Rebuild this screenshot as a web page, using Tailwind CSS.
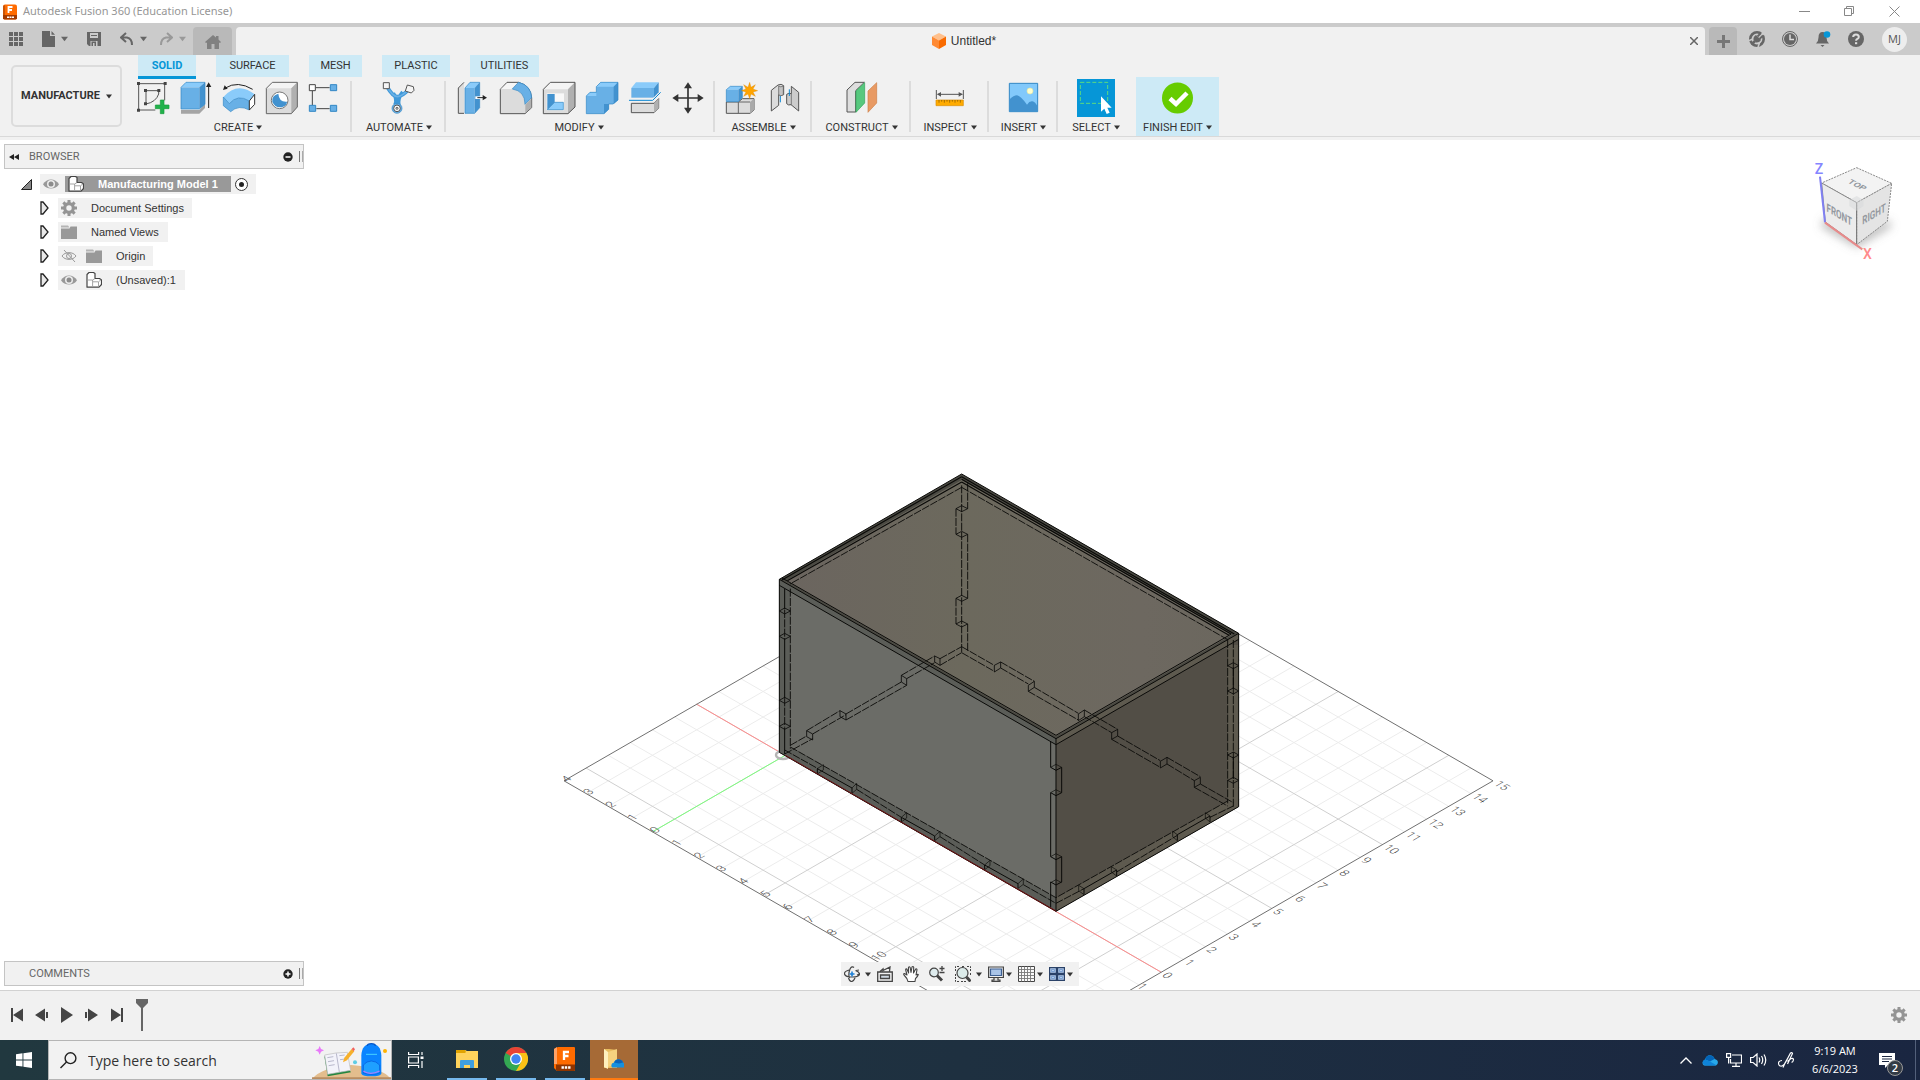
<!DOCTYPE html>
<html lang="en">
<head>
<meta charset="utf-8">
<title>Autodesk Fusion 360 (Education License)</title>
<script src="https://cdn.jsdelivr.net/npm/@tailwindcss/browser@4"></script>
</head>
<body class="flex h-screen flex-col overflow-hidden bg-white font-['Roboto',sans-serif] text-[11px] text-[#333]">

<svg class="hidden" aria-hidden="true">
  <symbol id="caret" viewBox="0 0 6 5"><path d="M0 .5h6L3 4.5z" fill="currentColor"/></symbol>
  <symbol id="eye" viewBox="0 0 16 16"><path d="M0 8.2C3.500 1.800 12.500 1.800 16 8.200 12.500 14 3.500 14 0 8.200z" fill="#999"/><circle cx="8" cy="8" r="4" fill="#ececec"/><circle cx="8" cy="8" r="2.500" fill="#8c8c8c"/></symbol>
  <symbol id="eyeoff" viewBox="0 0 16 16"><path d="M1 8C4 3.500 12 3.500 15 8 12 12.500 4 12.500 1 8zM3 2l11 12" fill="none" stroke="#999"/><circle cx="8" cy="8" r="2.500" fill="none" stroke="#999"/></symbol>
  <symbol id="gear" viewBox="0 0 16 16"><g fill="none" stroke="#949494"><circle cx="8" cy="8" r="4.300" stroke-width="3.200"/><path d="M8 0v3.500M8 12.500V16M0 8h3.500M12.500 8H16M2.340 2.340l2.500 2.500M11.160 11.160l2.500 2.500M2.340 13.660l2.500-2.500M11.160 4.840l2.500-2.500" stroke-width="3"/></g></symbol>
  <symbol id="folder" viewBox="0 0 16 16"><path d="M0 1.500h7l1.500 2H0z" fill="#b4b4b4"/><path d="M0 4.500h8.500l1-2H16V15H0z" fill="#999"/></symbol>
  <symbol id="comp" viewBox="0 0 16 16"><path d="M1 2.500l2-2h4.500l1.500 1v5h4.500l2 1.500v4.500l-2.500 2.700H1z" fill="#fff" stroke="#444" stroke-width="1.200" stroke-linejoin="round"/><path d="M1.600 8h5l2.400-1.500M6.600 8v6.500M7 9.800h5.500l2.500-2M12.500 10v4.500" fill="none" stroke="#999" stroke-width=".9"/></symbol>
  <symbol id="tri" viewBox="0 0 9 14"><path d="M1 1l2 0 5 6-5 6H1z" fill="#e9e9e9" stroke="#222" stroke-width="1.300"/></symbol>
</svg>

<!-- Window title bar -->
<header class="flex h-[23px] shrink-0 items-center pl-[3px] text-[#969696]">
  <svg class="h-4 w-4" viewBox="0 0 16 16"><rect width="14" height="15" y=".5" rx="2" fill="#ff6b00"/><path d="M0 11h14v3.500l-1 1H1l-1-1z" fill="#a33a00"/><path d="M0 2l2-1v10H0z" fill="#c95406"/><path d="M5.500 9V3h4M5.500 6h3.500" stroke="#fff" stroke-width="1.800" fill="none"/><path d="M4 13.200h7" stroke="#fff" stroke-width="1.500" stroke-dasharray="2 .5"/></svg>
  <h1 class="ml-1 font-['Noto_Sans',sans-serif] text-[11px]">Autodesk Fusion 360 (Education License)</h1>
  <div class="ml-auto mr-5 flex items-center gap-[34px]">
    <button aria-label="Minimize"><svg class="block h-[11px] w-[11px]" viewBox="0 0 11 11" fill="none" stroke="#888"><path d="M0 5.500h11"/></svg></button>
    <button aria-label="Restore"><svg class="block h-[11px] w-[11px]" viewBox="0 0 11 11" fill="none" stroke="#888"><path d="M.5 2.500h7v7h-7zM2.500 2.500v-2h7v7h-2"/></svg></button>
    <button aria-label="Close"><svg class="block h-[11px] w-[11px]" viewBox="0 0 11 11" fill="none" stroke="#888"><path d="M.5.5l10 10M10.500.5l-10 10"/></svg></button>
  </div>
</header>

<!-- Quick access bar and document tabs -->
<nav class="flex h-8 shrink-0 items-end bg-[#cbcbcb]">
  <div class="flex h-8 w-[193px] shrink-0 items-center pl-[9px] text-[#666]">
    <button aria-label="Data panel"><svg class="block h-[14px] w-[14px]" viewBox="0 0 14 14" fill="#666"><path d="M0 0h4v4H0zM5 0h4v4H5zM10 0h4v4h-4zM0 5h4v4H0zM5 5h4v4H5zM10 5h4v4h-4zM0 10h4v4H0zM5 10h4v4H5zM10 10h4v4h-4z"/></svg></button>
    <button aria-label="File" class="ml-[19px] flex items-center gap-[6px]"><svg class="h-4 w-[13px]" viewBox="0 0 13 16" fill="#666"><path d="M0 0h8v5h5v11H0zM9.500 0L13 3.700H9.500z"/></svg><svg class="h-[6px] w-[7px]"><use href="#caret"/></svg></button>
    <button aria-label="Save" class="ml-[19px]"><svg class="block h-[14px] w-[14px]" viewBox="0 0 14 14"><path d="M0 0h14v14H2l-2-2z" fill="#666"/><path d="M3 1h8v5H3zM3.500 9h7v5h-7z" fill="#cbcbcb"/><path d="M4.500 9.500h4.500v4.500H4.500zM4 3h6v1H4z" fill="#666"/><path d="M6 11h1.500v3H6z" fill="#cbcbcb"/></svg></button>
    <button aria-label="Undo" class="ml-[19px] flex items-center gap-[6px]"><svg class="h-[14px] w-[14px]" viewBox="0 0 14 14" fill="none" stroke="#666" stroke-width="2"><path d="M6 1L1 5.500 6 10M1.500 5.500H7q5 1 5 7.500"/></svg><svg class="h-[6px] w-[7px]"><use href="#caret"/></svg></button>
    <button aria-label="Redo" class="ml-3 flex items-center gap-[6px] text-[#999]"><svg class="h-[14px] w-[14px]" viewBox="0 0 14 14" fill="none" stroke="#999" stroke-width="2"><path d="M8 1l5 4.500L8 10M12.500 5.500H7q-5 1-5 7.500"/></svg><svg class="h-[6px] w-[7px]"><use href="#caret"/></svg></button>
  </div>
  <button aria-label="Home" class="flex h-7 w-[39px] items-center justify-center rounded-t-[4px] bg-[#b9b9b9]"><svg class="mt-px h-[14px] w-4" viewBox="0 0 16 14"><path d="M8 0l3 2.500V1h2.500v3.500L16 7l-1 1-1-.5V14H2V7.500L1 8 0 7z" fill="#808080"/><path d="M6.500 9h3v5h-3z" fill="#b9b9b9"/></svg></button>
  <div class="ml-1 flex h-7 flex-1 items-center rounded-t-[4px] bg-[#f1f1f1]">
    <div class="flex flex-1 items-center justify-center gap-[5px] pl-[2px] font-['Liberation_Sans',sans-serif] text-[12px]"><svg class="h-4 w-[14px]" viewBox="0 0 14 16"><path d="M7 0l7 3.500L7 7.500 0 3.500z" fill="#ffc08c"/><path d="M0 3.500l7 4V16l-7-4z" fill="#ff8a34"/><path d="M14 3.500l-7 4V16l7-4z" fill="#f96b00"/></svg>Untitled*</div>
    <button aria-label="Close tab" class="mr-[7px]"><svg class="block h-2 w-2" viewBox="0 0 8 8" stroke="#666" stroke-width="1.500"><path d="M0 0l8 8M8 0L0 8"/></svg></button>
  </div>
  <button aria-label="New tab" class="ml-1 flex h-7 w-7 items-center justify-center rounded-t-[4px] bg-[#b9b9b9]"><svg class="h-[13px] w-[13px]" viewBox="0 0 13 13" stroke="#777" stroke-width="3"><path d="M6.500 0v13M0 6.500h13"/></svg></button>
  <div class="flex h-8 items-center gap-[17px] pl-3 pr-[13px]">
    <button aria-label="Extensions"><svg class="block h-4 w-4" viewBox="0 0 16 16" fill="none"><circle cx="8" cy="8" r="6.700" stroke="#666" stroke-width="2.600"/><path d="M0 9.500L4 8M9 16l1.500-4" stroke="#cbcbcb" stroke-width="1.500"/><path d="M2.500 13.500l3.500-3.500" stroke="#666" stroke-width="2.500"/><path d="M4.500 9q-.5-3.500 2.500-5l5 5q-2 3-5 2.500z" fill="#666"/><path d="M11 5.500l4-4" stroke="#cbcbcb" stroke-width="3"/><path d="M8.500 5.500l3.500-3.500M10.500 8l3.500-3.500" stroke="#666" stroke-width="1.800"/></svg></button>
    <button aria-label="Job status"><svg class="block h-4 w-4" viewBox="0 0 16 16" fill="none"><circle cx="8" cy="8" r="7.500" stroke="#666"/><circle cx="8" cy="8" r="6" fill="#666"/><path d="M8 3.500V8.500h4" stroke="#ddd" stroke-width="1.500"/></svg></button>
    <button aria-label="Notifications"><svg class="block h-4 w-4" viewBox="0 0 16 16"><path d="M1 12.500q2.500-2 2.500-6Q3.500 1 7.500 1t4 5.500q0 4 2.500 6zM5.500 14h4l-2 2z" fill="#666"/><circle cx="12" cy="3.500" r="3.300" fill="#0696d7"/></svg></button>
    <button aria-label="Help"><svg class="block h-4 w-4" viewBox="0 0 16 16"><circle cx="8" cy="8" r="8" fill="#666"/><path d="M5.200 6q0-2.500 2.800-2.500T10.800 6Q10.800 7.300 9 8.200q-.9.500-.9 1.600" stroke="#ddd" stroke-width="2" fill="none"/><path d="M7 11.200h2.200v2H7z" fill="#ddd"/></svg></button>
    <button class="ml-px h-[25px] w-[25px] rounded-full bg-[#ededed] font-['Open_Sans',sans-serif] text-[11px] text-[#555]">MJ</button>
  </div>
</nav>

<!-- Ribbon -->
<section class="flex h-[82px] shrink-0 border-b border-[#d9d9d9] bg-[#f1f1f1]">
  <button class="ml-[11px] mt-[10px] flex h-[62px] w-[111px] shrink-0 items-center justify-center gap-[6px] rounded-[5px] border-2 border-[#dcdcdc] text-[11px] font-bold">MANUFACTURE <svg class="h-[5px] w-[6px]"><use href="#caret"/></svg></button>
  <div class="flex flex-1 flex-col pl-[2px]">
    <div class="flex h-[22px] items-start gap-5 pl-[14px]">
      <button class="relative z-10 h-6 w-[58px] border-b-[3px] border-[#0696d7] bg-[#cdeaf6] pt-px font-bold text-[#0696d7]">SOLID</button>
      <button class="h-[22px] w-[73px] bg-[#cdeaf6] pt-px">SURFACE</button>
      <button class="h-[22px] w-[53px] bg-[#cdeaf6] pt-px">MESH</button>
      <button class="h-[22px] w-[68px] bg-[#cdeaf6] pt-px">PLASTIC</button>
      <button class="h-[22px] w-[69px] bg-[#cdeaf6] pt-px">UTILITIES</button>
    </div>
    <div class="flex flex-1">
      <div class="relative flex w-[228px] flex-col justify-between pt-[5px] after:absolute after:right-0 after:top-1 after:h-[51px] after:w-[2px] after:bg-[#dcdcdc]">
        <div class="flex gap-[11px] px-3">
          <button aria-label="Create sketch"><svg class="block h-8 w-8 overflow-visible" viewBox="408 246 96 96" fill="none" stroke="#555" stroke-width="3"><path d="M418 251h76v50M416 254v76h50M438 272h38v10q-8 24-38 30z"/><path d="M411 246h9v9h-9zM491 246h9v9h-9zM411 326h9v9h-9zM432 267h9v9h-9zM472 267h9v9h-9zM432 307h9v9h-9z" fill="#444" stroke="none"/><path d="M481 300h11v15h15v11h-15v15h-11v-15h-15v-11h15z" fill="#21b24b" stroke="#189a3d" stroke-width="2"/></svg></button>
          <button aria-label="Extrude"><svg class="block h-8 w-8 overflow-visible" viewBox="537 246 96 96"><path d="M543 330h55l17-17v11l-17 17h-55z" fill="#a5a5a5"/><path d="M543 262l15-15h57l-17 15z" fill="#8acbfa"/><path d="M543 262h55v65h-55z" fill="#68b0e6"/><path d="M598 262l17-15v66l-17 14z" fill="#4292cf"/><path d="M543 262l15-15h57v66l-17 14h-55z" fill="none" stroke="#3287c4" stroke-width="2"/><path d="M626 252v72" stroke="#222" stroke-width="3"/><path d="M618 261l8-14 8 14z" fill="#222"/></svg></button>
          <button aria-label="Revolve"><svg class="block h-8 w-8 overflow-visible" viewBox="666 246 96 96"><path d="M670 291q43-48 94-8l-16 20q-35-22-60 8z" fill="#8acbfa"/><path d="M670 291l18 20q25-30 60-8v27q-32-17-56 5l-22-18z" fill="#68b0e6" stroke="#3287c4" stroke-width="2"/><path d="M748 303l16-20v30l-16 17z" fill="#fff" stroke="#333" stroke-width="3"/><path d="M676 264q37-23 82 4" fill="none" stroke="#222" stroke-width="3"/><path d="M669 270l5-14 9 10z" fill="#222"/></svg></button>
          <button aria-label="Hole"><svg class="block h-8 w-8 overflow-visible" viewBox="795 246 96 96"><path d="M799 265l18-18h75v74l-18 20h-75z" fill="#dcdcdc"/><path d="M799 265l18-18h75l-18 18z" fill="#f4f4f4"/><path d="M874 265l18-18v74l-18 20z" fill="#b0b0b0"/><path d="M799 265l18-18h75v74l-18 20h-75z" fill="none" stroke="#666" stroke-width="3"/><circle cx="839" cy="301" r="25" fill="#fff" stroke="#777" stroke-width="3"/><path d="M835 281q-20 5-18 24 8 20 30 16 14-5 14-16-24 2-26-24z" fill="#4292cf"/></svg></button>
          <button aria-label="Rectangular pattern"><svg class="block h-8 w-8 overflow-visible" viewBox="924 246 96 96" stroke-width="3"><path d="M947 263h42M937 273v42M949 326h40" fill="none" stroke="#444"/><path d="M928 254h18v18h-18z" fill="#fff" stroke="#444"/><path d="M991 254h19v18h-19zM928 316h19v18h-19zM991 316h19v18h-19z" fill="#68b0e6" stroke="#3287c4"/></svg></button>
        </div>
        <button class="flex items-center justify-center gap-[3px]">CREATE <svg class="h-[5px] w-[6px]"><use href="#caret"/></svg></button>
      </div>
      <div class="relative flex w-[94px] flex-col justify-between pt-[5px] after:absolute after:right-0 after:top-1 after:h-[51px] after:w-[2px] after:bg-[#dcdcdc]">
        <button aria-label="Automated modeling" class="mx-auto"><svg class="block h-8 w-8 overflow-visible" viewBox="1149 246 96 96"><path d="M1160 258q18 32 32 32t36-24M1180 280q13 18 5 34M1208 276q-17 20-11 42" fill="none" stroke="#3e98d8" stroke-width="11"/><path d="M1160 258q18 32 32 32t36-24" fill="none" stroke="#68b0e6" stroke-width="5"/><circle cx="1191" cy="325" r="15" fill="#68b0e6" stroke="#3287c4" stroke-width="2"/><g fill="#f5f5f5" stroke="#555" stroke-width="3"><circle cx="1191" cy="325" r="10"/><circle cx="1191" cy="325" r="3"/><path d="M1150 248h18v18h-18zM1222 255l18 5 2 11-8 8-18-6z"/></g></svg></button>
        <button class="flex items-center justify-center gap-[3px]">AUTOMATE <svg class="h-[5px] w-[6px]"><use href="#caret"/></svg></button>
      </div>
      <div class="relative flex w-[269px] flex-col justify-between pt-[5px] after:absolute after:right-0 after:top-1 after:h-[51px] after:w-[2px] after:bg-[#dcdcdc]">
        <div class="flex gap-[11px] px-3">
          <button aria-label="Press pull"><svg class="block h-8 w-8 overflow-visible" viewBox="54 126 96 96"><path d="M72 127l-17 17v76h17" fill="#ddd" stroke="#555" stroke-width="3"/><path d="M75 144l15-17h29l-14 17z" fill="#8acbfa"/><path d="M75 144h29v76H75z" fill="#68b0e6"/><path d="M104 144l15-17v76l-15 17z" fill="#4292cf"/><path d="M75 144l15-17h29v76l-15 17H75z" fill="none" stroke="#3287c4" stroke-width="2"/><path d="M106 173h26" stroke="#fff" stroke-width="8"/><path d="M112 173h20" stroke="#222" stroke-width="3"/><path d="M128 165l13 8-13 8z" fill="#222"/></svg></button>
          <button aria-label="Fillet"><svg class="block h-8 w-8 overflow-visible" viewBox="183 126 96 96"><path d="M181 148l20-21h35q37 10 39 48v28l-20 18h-74z" fill="#dcdcdc" stroke="#555" stroke-width="3"/><path d="M217 147l18-20q38 8 40 46l-20 20q0-40-38-46z" fill="#68b0e6" stroke="#3287c4" stroke-width="2"/><path d="M183 147l19-18h30l-18 18z" fill="#f6f6f6"/><path d="M256 194l18-18v27l-18 16z" fill="#b0b0b0"/></svg></button>
          <button aria-label="Shell"><svg class="block h-8 w-8 overflow-visible" viewBox="312 126 96 96"><path d="M310 148l21-21h74v74l-21 20h-74z" fill="#dcdcdc"/><path d="M310 148l21-21h74l-21 21z" fill="#f4f4f4"/><path d="M384 148l21-21v74l-21 20z" fill="#b0b0b0"/><path d="M310 148l21-21h74v74l-21 20h-74z" fill="none" stroke="#555" stroke-width="3"/><path d="M320 160h52v51h-52z" fill="#f8f8f8"/><path d="M322 162h22v25l-22 22z" fill="#4292cf"/><path d="M322 209l22-22h26v22z" fill="#8acbfa" stroke="#3287c4" stroke-width="2"/></svg></button>
          <button aria-label="Combine"><svg class="block h-8 w-8 overflow-visible" viewBox="441 126 96 96"><path d="M439 168l11-11h19v-17l13-13h52v53l-15 12h-13v16l-14 13h-53z" fill="#68b0e6"/><path d="M469 140l13-13h52l-13 13zM439 168l11-11h19v11z" fill="#8acbfa"/><path d="M521 140l13-13v53l-13 12zM492 221v-29h14v16z" fill="#4292cf"/><path d="M439 168l11-11h19v-17l13-13h52v53l-15 12h-13v16l-14 13h-53z" fill="none" stroke="#3287c4" stroke-width="2"/></svg></button>
          <button aria-label="Split body"><svg class="block h-8 w-8 overflow-visible" viewBox="570 126 96 96"><path d="M574 190h68l14-14v28l-14 14h-68z" fill="#dcdcdc" stroke="#555" stroke-width="3"/><path d="M642 190l14-14v28l-14 14z" fill="#b0b0b0"/><path d="M574 144l14-17h68l-14 17z" fill="#8acbfa"/><path d="M574 144h68v29h-68z" fill="#68b0e6"/><path d="M642 144l14-17v30l-14 16z" fill="#4292cf"/><path d="M566 181h72l24-23" fill="none" stroke="#f1f1f1" stroke-width="8"/><path d="M567 181h71l24-24" fill="none" stroke="#0b87d3" stroke-width="3"/></svg></button>
          <button aria-label="Move"><svg class="block h-8 w-8 overflow-visible" viewBox="699 126 96 96"><path d="M744 140v68M710 174h68" stroke="#333" stroke-width="5"/><path d="M744 127l12 18h-24zM744 221l12-18h-24zM697 174l18-12v24zM791 174l-18-12v24z" fill="#333"/></svg></button>
        </div>
        <button class="flex items-center justify-center gap-[3px] pr-[3px]">MODIFY <svg class="h-[5px] w-[6px]"><use href="#caret"/></svg></button>
      </div>
      <div class="relative flex w-[97px] flex-col justify-between pt-[5px] after:absolute after:right-0 after:top-1 after:h-[51px] after:w-[2px] after:bg-[#dcdcdc]">
        <div class="flex gap-[11px] px-3">
          <button aria-label="New component"><svg class="block h-8 w-8 overflow-visible" viewBox="861 126 96 96"><path d="M859 186h36l12-10h35v34l-12 10h-71z" fill="#dcdcdc" stroke="#555" stroke-width="3"/><path d="M930 186l12-10v34l-12 10z" fill="#aaa"/><path d="M895 186v34M897 186h33" stroke="#666" stroke-width="3"/><path d="M859 149l12-10h36l-12 10z" fill="#8acbfa"/><path d="M859 149h36v36h-36z" fill="#68b0e6"/><path d="M895 149l12-10v34l-12 12z" fill="#4292cf"/><path d="M859 149l12-10h36v34l-12 12h-36z" fill="none" stroke="#3287c4" stroke-width="2"/><path d="M929 127l4 15 13-8-7 13 14 5-14 4 7 13-13-7-4 14-5-14-13 7 7-13-14-4 14-5-7-13 13 8z" fill="#ffa400" stroke="#d98300" stroke-width="1"/></svg></button>
          <button aria-label="Joint"><svg class="block h-8 w-8 overflow-visible" viewBox="990 126 96 96" stroke="#555" stroke-width="3"><path d="M994 151l20-16q10-5 17 2v27q-10 6-15 0v32l-22 17z" fill="#dcdcdc"/><path d="M1016 138v26q6 7 14 0v-26q-8 5-14 0z" fill="#c4c4c4" stroke-width="2"/><path d="M1076 213l-23-19q-8 3-13-3v-28q6-5 14-2v-22l22 18z" fill="#ccc"/><path d="M1054 161v33" stroke-width="2"/><path d="M1021 168v19M1048 148v20" stroke="#0b87d3"/></svg></button>
        </div>
        <button class="flex items-center justify-center gap-[3px]">ASSEMBLE <svg class="h-[5px] w-[6px]"><use href="#caret"/></svg></button>
      </div>
      <div class="relative flex w-[99px] flex-col justify-between pt-[5px] after:absolute after:right-0 after:top-1 after:h-[51px] after:w-[2px] after:bg-[#dcdcdc]">
        <button aria-label="Offset plane" class="mx-auto"><svg class="block h-8 w-8 overflow-visible" viewBox="1216 126 96 96"><path d="M1243 216h-24v-66l24-23h28l-26 25v64z" fill="#dedede" stroke="#555" stroke-width="3"/><path d="M1246 153l26-25v61l-26 28z" fill="#57c87e" stroke="#31a659" stroke-width="2"/><path d="M1282 153l26-25v61l-26 28z" fill="#e89a63" stroke="#ce7f45" stroke-width="2"/></svg></button>
        <button class="flex items-center justify-center gap-[3px]">CONSTRUCT <svg class="h-[5px] w-[6px]"><use href="#caret"/></svg></button>
      </div>
      <div class="relative flex w-[78px] flex-col justify-between pt-[5px] after:absolute after:right-0 after:top-1 after:h-[51px] after:w-[2px] after:bg-[#dcdcdc]">
        <button aria-label="Measure" class="mx-auto"><svg class="block h-8 w-8 overflow-visible" viewBox="223 186 96 96"><path d="M230 210v27M311 210v27M234 223h74" stroke="#555" stroke-width="3"/><path d="M232 223l12-7v14zM309 223l-12-7v14z" fill="#555"/><path d="M229 240h82v17h-82z" fill="#ffab00" stroke="#d98c00" stroke-width="2"/><path d="M238 240v8M246 240v5M254 240v8M262 240v5M270 240v8M278 240v5M286 240v8M294 240v5M302 240v8" stroke="#7a5200" stroke-width="2"/></svg></button>
        <button class="flex items-center justify-center gap-[3px]">INSPECT <svg class="h-[5px] w-[6px]"><use href="#caret"/></svg></button>
      </div>
      <div class="relative flex w-[69px] flex-col justify-between pt-[5px] after:absolute after:right-0 after:top-1 after:h-[51px] after:w-[2px] after:bg-[#dcdcdc]">
        <button aria-label="Insert image" class="mx-auto"><svg class="block h-8 w-8 overflow-visible" viewBox="444 186 96 96"><path d="M448 190h85v85h-85z" fill="#82c9fb" stroke="#3287c4" stroke-width="3"/><path d="M449 238q12-12 22-12 10 1 30 28 7-11 16-10 9 2 15 14v16h-83z" fill="#4292cf"/><circle cx="510" cy="213" r="9" fill="#ffffd0" stroke="#e9e9a0" stroke-width="2"/></svg></button>
        <button class="flex items-center justify-center gap-[3px]">INSERT <svg class="h-[5px] w-[6px]"><use href="#caret"/></svg></button>
      </div>
      <div class="flex w-[78px] flex-col justify-between pr-[2px] pt-[2px]">
        <button aria-label="Window selection" class="mx-auto bg-[#0696d7]"><svg class="block h-[38px] w-[38px]" viewBox="651 177 114 114"><path d="M661 187h82v63h-82z" fill="none" stroke="#5ddb7f" stroke-width="3" stroke-dasharray="12 6"/><path d="M723 229v46l10-9 7 16 9-4-7-15h13z" fill="#fff"/></svg></button>
        <button class="flex items-center justify-center gap-[3px]">SELECT <svg class="h-[5px] w-[6px]"><use href="#caret"/></svg></button>
      </div>
      <div class="flex w-[83px] flex-col justify-between bg-[#cdeaf6] pt-[5px]">
        <button aria-label="Finish" class="mx-auto"><svg class="block h-8 w-8" viewBox="0 0 32 32"><circle cx="15.500" cy="16" r="15.500" fill="#66cc00"/><path d="M8 16.500l6 5.500L25 11" fill="none" stroke="#fff" stroke-width="4.500"/></svg></button>
        <button class="flex items-center justify-center gap-[3px]">FINISH EDIT <svg class="h-[5px] w-[6px]"><use href="#caret"/></svg></button>
      </div>
    </div>
  </div>
</section>
<div class="h-[3px] shrink-0 bg-[#f1f1f1]"></div>

<!-- Modelling canvas -->
<main class="relative min-h-0 flex-1 overflow-hidden bg-white">
  <svg class="absolute inset-0 h-full w-full" viewBox="0 140 1920 850" preserveAspectRatio="xMidYMid slice" role="img" aria-label="Box model on ground grid">
    <g id="grid" fill="none"></g>
    <g id="labels" fill="#444" font-family="Roboto, sans-serif" font-size="10" font-weight="300"></g>
    <ellipse cx="783" cy="755" rx="7" ry="4" fill="none" stroke="#b5b5b5" stroke-width="2.500"/>
    <defs>
      <linearGradient id="inner" x1="0" y1="0" x2="1" y2="0"><stop offset="0" stop-color="#6b655f"/><stop offset=".4" stop-color="#6c695d"/><stop offset=".8" stop-color="#6d6860"/><stop offset="1" stop-color="#6b675e"/></linearGradient>
    </defs>
    <g transform="translate(760 460) scale(.33333)" stroke-width="3" stroke-linejoin="round">
      <path d="M605 42l831 478v520l-548 314L58 877V358z" fill="#4a4942"/>
      <path d="M605 60l811 464-528 304L78 362z" fill="url(#inner)"/>
      <path d="M58 358l830 478v518L58 877z" fill="#6b6c67"/>
      <path d="M888 836l548-316v520l-548 314z" fill="#524e46"/>
      <path d="M58 358l830 478v18L58 376zM58 376h33v485l797 452v41L58 877z" fill="#40423d" fill-opacity=".35"/>
      <path d="M888 836l548-316v18L888 854zM1403 555h33v485l-548 314v-41l515-290z" fill="#7a7668" fill-opacity=".3"/>
      <g fill="none" stroke="#0a0a08">
        <path d="M605 42l831 478v520l-548 314L58 877V358z"/>
        <path d="M605 50l818 472M605 50L66 360M605 58l808 464M605 66L82 362M605 66l802 460" stroke-width="3.500"/>
        <path d="M58 358l830 478 548-316M66 354l822 472 526-304M58 376l830 478 548-316"/>
        <path d="M888 836v518"/>
        <path d="M74 386v62M74 538v177M74 802v80M872 846v76l16 9 17-9v76l-17 9-16-9v192l16 9 17-9v76l-17 9-16-9v76"/>
        <path d="M872 922l16-9 17 9M872 998l16-9 17 9M872 1190l16-9 17 9M872 1268l16-9 17 9" stroke-width="2"/>
        <path d="M1420 620v66M1420 890v66M172 926l104 58v16M172 926v16M424 1072l100 56v14M424 1072v14M674 1215l100 56v14M674 1215v14M972 1286l98-56v18M972 1286v18M1252 1124l98-56v18M1252 1124v18"/>
        <path d="M58 453l16-9 17 9-17 9zM58 529l16-9 17 9-17 9zM58 721l16-9 17 9-17 9zM58 799l16-9 17 9-17 9zM588 146l17-9 18 9-18 9zM588 223l17-9 18 9-18 9zM588 415l17-9 18 9-18 9zM588 492l17-9 18 9-18 9zM1403 617l17-9 16 9-16 9zM1403 693l17-9 16 9-16 9zM1403 885l17-9 16 9-16 9zM1403 961l17-9 16 9-16 9z" stroke-width="2.500"/>
        <path d="M172 926l18-12v16l-18 12M276 984l14-14v18l-14 12M424 1072l16-14v16l-16 12M524 1128l16-14v16l-16 12M674 1215l16-14v16l-16 12M774 1271l16-14v16l-16 12M972 1286l-16-10v16l16 12M1070 1230l-16-10v16l16 12M1252 1124l-14-10v16l14 12M1350 1068l-14-10v16l14 12" stroke-width="2"/>
        <!-- finger joints seen through the walls -->
        <path d="M140 812l18 10v18l-18-10zM240 752l18 10v18l-18-10zM424 646l16 10v20l-16-10zM524 588l16 8v20l-16-10zM703 616l19-10v18l-19 12zM805 676l18-12v18l-18 12zM955 762l18-12v20l-18 12zM1055 818l18-10v20l-18 10zM1201 904l20-12v20l-20 12zM1303 962l18-10v20l-18 10z" stroke-width="2.500"/>
        <g stroke-width="3" stroke-dasharray="24 4" stroke-opacity=".9">
          <path d="M91 386v480M74 450v90M74 715v85M605 76v502M623 70v76M588 146v77M623 223v192M588 415v77M623 492v80M605 82L90 372M605 82l800 458M1403 540v490M1420 540v500"/>
          <path d="M91 861l797 452 515-290M74 870l100 56M290 988l134 84M540 1130l134 85M790 1274l98 56 84-44M1070 1236l182-110M1350 1072l70-34"/>
          <path d="M74 882l84-46M91 856l49-28M140 812l100-60M158 822l100-58M258 780l182-104M258 762l166-96M424 646l100-58M440 656l84-48M540 596l65-36M540 616l65-38"/>
          <path d="M605 560l98 56M605 578l98 56M722 606l101 58M722 624l83 48M805 694l150 86M823 682l132 78M973 750l100 58M973 770l82 48M1055 838l146 84M1073 828l128 74M1221 892l100 58M1221 912l82 50M1303 982l100 56M1321 972l99 56"/>
        </g>
      </g>
      <path d="M76 886l812 467" stroke="#6e1414" stroke-width="3" fill="none"/>
    </g>
  </svg>

  <!-- View cube -->
  <svg class="absolute right-0 top-0 h-[140px] w-[280px]" viewBox="0 420 840 420" role="img" aria-label="View cube">
    <defs><filter id="soft" x="-50%" y="-50%" width="200%" height="200%"><feGaussianBlur stdDeviation="14"/></filter></defs>
    <path d="M552 655l98 45 98-40 6 20-104 62-106-62z" fill="#777" fill-opacity=".5" filter="url(#soft)"/>
    <g stroke="#888" stroke-width="3" stroke-linejoin="round"><path d="M650 503l105 47-105 58-105-59z" fill="#f3f3f3" stroke-dasharray="6 3"/><path d="M545 549l105 59v126l-94-68z" fill="#ececec"/><path d="M755 550l-105 58v126l92-70z" fill="#e4e4e4" stroke-dasharray="6 3"/><path d="M650 608v126" stroke="#777"/></g>
    <path d="M628 600l22-12 20 12v18l-20 14-22-14z" fill="#d5d8da" fill-opacity=".5"/>
    <path d="M540 530l15 137" stroke="#8080f2" stroke-width="6"/><path d="M555 668l112 80" stroke="#e88a8a" stroke-width="6"/>
    <g font-family="Roboto, sans-serif" font-weight="700" fill="#9499a0" text-anchor="middle" font-size="30">
      <text transform="matrix(.85 .42 -.6 .5 646 560)">TOP</text>
      <text transform="matrix(.8 .46 0 1.150 598 656)">FRONT</text>
      <text transform="matrix(.8 -.46 0 1.150 702 654)">RIGHT</text>
      <text x="537" y="521" font-size="42" font-weight="500" fill="#8585ff">Z</text>
      <text x="682" y="776" font-size="42" font-weight="500" fill="#ff8a8a">X</text>
    </g>
  </svg>

  <!-- Browser tree -->
  <aside class="absolute left-1 top-1 w-[300px] font-['Liberation_Sans',sans-serif] text-[11px]">
    <div class="flex h-[25px] items-center border border-[#c4c4c4] bg-[#f1f1f1] pl-1 font-['Roboto',sans-serif] text-[#666]">
      <button aria-label="Collapse"><svg class="block h-[6px] w-[10px]" viewBox="0 0 10 6" fill="#222"><path d="M5 0v6L0 3zM10 0v6L5 3z"/></svg></button>
      <h2 class="ml-[10px] pt-px">BROWSER</h2>
      <button aria-label="Minimize browser" class="ml-auto"><svg class="block h-[10px] w-[10px]" viewBox="0 0 10 10"><circle cx="5" cy="5" r="4.700" fill="#222"/><path d="M2.500 5h5" stroke="#fff" stroke-width="1.500"/></svg></button>
      <span class="ml-[6px] h-[11px] w-[4px] border-x border-l-[#777] border-r-[#aaa]"></span>
    </div>
    <ul class="mt-[5px] flex flex-col items-start gap-1">
      <li class="flex h-5 items-center pl-[17px]"><svg class="mr-2 h-[11px] w-[11px]" viewBox="0 0 11 11"><path d="M10.500.5v10H.5z" fill="#888" stroke="#222"/></svg>
        <div class="flex h-5 w-[216px] items-center bg-[#f1f1f1] pl-[3px]"><svg class="h-4 w-4"><use href="#eye"/></svg><span class="ml-[6px] flex h-4 w-[166px] items-center bg-[#999] pl-[3px] font-bold text-white"><svg class="mr-[14px] h-4 w-4"><use href="#comp"/></svg>Manufacturing Model 1</span><button aria-label="Activate" class="ml-1"><svg class="block h-[13px] w-[13px]" viewBox="0 0 13 13"><circle cx="6.500" cy="6.500" r="6" fill="#fff" stroke="#333"/><circle cx="6.500" cy="6.500" r="2.500" fill="#222"/></svg></button></div></li>
      <li class="flex h-5 items-center pl-9"><svg class="mr-[9px] h-[14px] w-[9px]"><use href="#tri"/></svg><div class="flex h-5 w-[134px] items-center bg-[#f1f1f1] pl-[3px]"><svg class="mr-[14px] h-4 w-4"><use href="#gear"/></svg>Document Settings</div></li>
      <li class="flex h-5 items-center pl-9"><svg class="mr-[9px] h-[14px] w-[9px]"><use href="#tri"/></svg><div class="flex h-5 w-[110px] items-center bg-[#f1f1f1] pl-[3px]"><svg class="mr-[14px] h-4 w-4"><use href="#folder"/></svg>Named Views</div></li>
      <li class="flex h-5 items-center pl-9"><svg class="mr-[9px] h-[14px] w-[9px]"><use href="#tri"/></svg><div class="flex h-5 w-[95px] items-center bg-[#f1f1f1] pl-[3px]"><svg class="mr-[9px] h-4 w-4"><use href="#eyeoff"/></svg><svg class="mr-[14px] h-4 w-4"><use href="#folder"/></svg>Origin</div></li>
      <li class="flex h-5 items-center pl-9"><svg class="mr-[9px] h-[14px] w-[9px]"><use href="#tri"/></svg><div class="flex h-5 w-[127px] items-center bg-[#f1f1f1] pl-[3px]"><svg class="mr-[9px] h-4 w-4"><use href="#eye"/></svg><svg class="mr-[14px] h-4 w-4"><use href="#comp"/></svg>(Unsaved):1</div></li>
    </ul>
  </aside>

  <!-- Comments -->
  <div class="absolute bottom-1 left-1 flex h-[25px] w-[300px] items-center border border-[#c4c4c4] bg-[#f1f1f1] pl-6 text-[#666]">
    <h2 class="pt-px">COMMENTS</h2>
    <button aria-label="Expand comments" class="ml-auto"><svg class="block h-[10px] w-[10px]" viewBox="0 0 10 10"><circle cx="5" cy="5" r="4.700" fill="#222"/><path d="M2.500 5h5M5 2.500v5" stroke="#fff" stroke-width="1.500"/></svg></button>
    <span class="ml-[6px] h-[11px] w-[4px] border-x border-l-[#777] border-r-[#aaa]"></span>
  </div>

  <!-- Navigation bar -->
  <div class="absolute bottom-1 left-1/2 flex h-6 w-[238px] -translate-x-1/2 items-center bg-[#f1f1f1] pl-[3px]">
    <button aria-label="Orbit" class="flex items-center gap-[5px]"><svg class="h-4 w-4" viewBox="0 0 16 16" fill="none" stroke="#444" stroke-width="1.200"><path d="M5 4Q0 5.500.5 8q1 3 8 3t7-3q0-2-4-3.500M4.500 12q1 3.500 3 3.500T11 12M10 1.500Q8-.5 6 3 4 8 5.500 12M12 4.500L15 4M13 9l2.500-1"/><path d="M5.500 8h5M8 5.500v5" stroke="#1c7fd6" stroke-width="1.600"/></svg><svg class="h-[5px] w-[6px]"><use href="#caret"/></svg></button>
    <button aria-label="Look at" class="ml-[6px]"><svg class="block h-4 w-4" viewBox="0 0 16 16" fill="none" stroke="#444" stroke-width="1.300"><path d="M.7 6h14.600v9.300H.7zM3 5.500l3-2.500v1.500L13 1l-.5 4.500"/><path d="M3.500 9h9v3.500h-9z" fill="#cfd8e2"/></svg></button>
    <button aria-label="Pan" class="ml-[10px]"><svg class="block h-4 w-4" viewBox="0 0 16 16" fill="#fff" stroke="#444" stroke-width="1.100" stroke-linejoin="round"><path d="M5 15.500Q4.500 12.500 1 9q-1-1.500.5-1.500L4 9 2.700 4q-.2-1.500 1.200-1l1.700 4L5.500 1.500q.7-1.500 1.700 0L8 6.500l1-5.500q1-1 1.700.2L10.500 7l2.200-4q1.300-.5 1.300.7L13 9q1-1 2.300-.5Q14.500 11 12.500 12.500l-.5 3z"/></svg></button>
    <button aria-label="Zoom" class="ml-[10px]"><svg class="block h-4 w-4" viewBox="0 0 16 16" fill="none" stroke="#444"><circle cx="5" cy="6.500" r="4.300" fill="#dfecee" stroke-width="1.200"/><path d="M8 9.500l5 5" stroke-width="3"/><path d="M13 0v5M10.500 2.500h5M10.500 6.500h5" stroke-width="1.300"/></svg></button>
    <button aria-label="Fit" class="ml-[10px] flex items-center gap-[5px]"><svg class="h-4 w-4" viewBox="0 0 16 16" fill="none" stroke="#444"><path d="M.5 5V.5H5M7 .5h3M12 .5h3.500V5M.5 8v7.500H4M6 15.500h5M15.500 7v3" stroke-dasharray="2 1"/><circle cx="7.500" cy="7" r="5.500" fill="#dcebea" stroke-width="1.200"/><path d="M11.500 11l4 4.500" stroke-width="3"/></svg><svg class="h-[5px] w-[6px]"><use href="#caret"/></svg></button>
    <button aria-label="Display settings" class="ml-[6px] flex items-center gap-[2px]"><svg class="h-4 w-4" viewBox="0 0 16 16" stroke="#444" stroke-width="1.200"><path d="M.6 1h14.800v10.500H.6z" fill="#eee"/><path d="M2.500 3h11v6.500h-11z" fill="#a9c4e8" stroke="#3d5f92"/><path d="M6 11.500h4v2.500h2v1.400H4V14h2z" fill="#ddd"/></svg><svg class="h-[5px] w-[6px]"><use href="#caret"/></svg></button>
    <button aria-label="Grid and snaps" class="ml-[6px] flex items-center gap-[2px]"><svg class="h-4 w-[17px]" viewBox="0 0 17 16" fill="#fafafa" stroke="#777"><path d="M.5.500h16v15H.5z" stroke="#444"/><path d="M3.500.500v15M6.500.500v15M9.500.500v15M12.500.500v15M.5 3.500h16M.5 6.500h16M.5 9.500h16M.5 12.500h16" stroke-width=".9"/></svg><svg class="h-[5px] w-[6px]"><use href="#caret"/></svg></button>
    <button aria-label="Viewports" class="ml-[6px] flex items-center gap-[2px]"><svg class="h-[14px] w-4" viewBox="0 0 16 14" fill="#b6cdec" stroke="#2b4268" stroke-width="1.200"><path d="M.6.600h6.800v5.800H.6zM8.600.600h6.800v5.800H8.600zM.6 7.600h6.800v5.800H.6zM8.600 7.600h6.800v5.800H8.600z"/><path d="M2.500 2.500h3v2h-3zM10.500 2.500h3v2h-3zM2.500 9.500h3v2h-3zM10.500 9.500h3v2h-3z" stroke="#6d96cc" stroke-width=".8"/></svg><svg class="h-[5px] w-[6px]"><use href="#caret"/></svg></button>
  </div>
</main>

<!-- Timeline -->
<section class="flex h-[50px] shrink-0 items-center border-t border-[#d2d2d2] bg-[#f1f1f1] pb-[2px] pl-[11px] pr-[13px]">
  <div class="flex items-center gap-3">
    <button aria-label="Go to start"><svg class="block h-[14px] w-3" viewBox="0 0 12 14" fill="#444"><path d="M0 0h2v14H0zM12 .5v13L2 7z"/></svg></button>
    <button aria-label="Step back"><svg class="block h-[14px] w-[13px]" viewBox="0 0 13 14" fill="#444"><path d="M10 .5v13L0 7zM11 4h2v6h-2z"/></svg></button>
    <button aria-label="Play" class="ml-px"><svg class="block h-4 w-3" viewBox="0 0 12 16" fill="#444"><path d="M0 0l12 8-12 8z"/></svg></button>
    <button aria-label="Step forward"><svg class="block h-[14px] w-[13px]" viewBox="0 0 13 14" fill="#444"><path d="M3 .5v13L13 7zM0 4h2v6H0z"/></svg></button>
    <button aria-label="Go to end" class="ml-px"><svg class="block h-[14px] w-3" viewBox="0 0 12 14" fill="#444"><path d="M10 0h2v14h-2zM0 .5v13L10 7z"/></svg></button>
    <svg class="ml-px h-8 w-3 overflow-visible" viewBox="0 0 12 32" fill="#666"><path d="M0 0h12v4L7 9v23H5V9L0 4z"/></svg>
  </div>
  <button aria-label="Timeline settings" class="ml-auto"><svg class="block h-4 w-4"><use href="#gear"/></svg></button>
</section>

<!-- Windows taskbar -->
<footer class="flex h-10 shrink-0 items-stretch bg-linear-to-r from-[#21383f] via-[#1e3040] to-[#1a2641] font-['Open_Sans',sans-serif] text-white">
  <button aria-label="Start" class="flex w-12 items-center justify-center"><svg class="h-4 w-4" viewBox="0 0 16 16" fill="#fff"><path d="M0 2.200L6.500 1.300v6.200H0zM7.400 1.200L16 0v7.500H7.400zM0 8.400h6.500v6.200L0 13.700zM7.400 8.400H16V16l-8.600-1.200z"/></svg></button>
  <label class="flex w-[344px] items-center border border-[#b5b5b5] bg-[#f2f2f2] pl-[11px]">
    <svg class="h-[17px] w-[17px] shrink-0" viewBox="0 0 17 17" fill="none" stroke="#222" stroke-width="1.400"><circle cx="10.500" cy="6.200" r="5.400"/><path d="M6.500 10L.5 16"/></svg>
    <input type="text" aria-label="Search" placeholder="Type here to search" class="ml-[11px] min-w-0 flex-1 bg-transparent text-[14px] outline-none placeholder:text-[#333]">
    <svg class="h-[38px] w-[79px] shrink-0" viewBox="938 272 237 114"><path d="M938 386q30-36 118-42 90 6 119 42z" fill="#e3bd8d"/><path d="M938 386v-5h237v5z" fill="#b98d60"/><path d="M961 287l4 9 9 4-9 4-4 9-4-9-9-4 9-4z" fill="#e879f9"/><circle cx="1157" cy="302" r="6" fill="#ffb300"/><circle cx="1067" cy="336" r="6" fill="#5fcde4"/><path d="M975 318l10 60 70-12-8-12z" fill="#22863f"/><path d="M976 314l34-6 34-2 10 54-35 6-34 6z" fill="#f3f3fa" stroke="#bbb" stroke-width="2"/><path d="M1011 309l9 56M984 322l18-3M986 334l18-3M988 346l18-3M1020 316l16-2M1022 328l16-2" stroke="#b9b9cc" stroke-width="3"/><path d="M1031 336l4-14 22-26 8 7-22 27z" fill="#f6b02c"/><path d="M1057 296l5-5 5 6-4 6z" fill="#f2605c"/><path d="M1086 370v-55q2-35 30-35t30 35v55q-4 8-30 8t-30-8z" fill="#0a84ff"/><path d="M1104 287q0-7 12-7t12 7" fill="none" stroke="#0757c9" stroke-width="4"/><path d="M1092 344q10-12 24-12t25 12v24q-20 8-49 0z" fill="#1fa0ff" stroke="#0553d6" stroke-width="2"/><path d="M1092 362q20 14 49 0" fill="none" stroke="#b07cff" stroke-width="4"/><path d="M1100 312h33" stroke="#46d3ff" stroke-width="3"/></svg>
  </label>
  <button aria-label="Task view" class="flex w-12 items-center justify-center"><svg class="h-4 w-4" viewBox="0 0 16 16" fill="none" stroke="#fff" stroke-width="1.200"><path d="M.6 5h9.800v6H.6zM.6 0v2.500h10V0M.6 16v-2.500h10V16M14 0v3M14 9v7"/><path d="M12.500 4.500h3v2.500h-3z" fill="#fff" stroke="none"/></svg></button>
  <div class="flex gap-[9px] pl-[7px]">
    <button aria-label="File Explorer" class="flex w-10 items-center justify-center border-b-2 border-[#76b9ed]"><svg class="h-[18px] w-[22px]" viewBox="0 0 22 18"><path d="M0 0h9l2 1h11v17H0z" fill="#ffd35c"/><path d="M0 0h9l1 2-1 1H0z" fill="#e2a400"/><path d="M4 18v-7q0-1 1-1h12q1 0 1 1v7h-4v-3H8v3z" fill="#3f9fe0"/></svg></button>
    <button aria-label="Google Chrome" class="flex w-10 items-center justify-center border-b-2 border-[#76b9ed]"><svg class="h-6 w-6" viewBox="0 0 24 24"><circle cx="12" cy="12" r="12" fill="#34a853"/><path d="M12 12L1.600 6A12 12 0 0 1 22.400 6H12z" fill="#ea4335"/><path d="M12 6h10.400A12 12 0 0 1 12 24l5.200-9z" fill="#fbc116"/><circle cx="12" cy="12" r="6" fill="#fff"/><circle cx="12" cy="12" r="4.700" fill="#4285f4"/></svg></button>
    <button aria-label="Fusion 360" class="flex w-10 items-center justify-center border-b-2 border-[#76b9ed]"><svg class="h-6 w-6" viewBox="0 0 24 24"><path d="M1 2l4-2h16q1 0 1 1v22q0 1-1 1H4l-3-3z" fill="#ff6b00"/><path d="M3 17.500h19V23q0 1-1 1H4l-1-1z" fill="#8f3400"/><path d="M1 2l3-2v17H1z" fill="#ffa266"/><path d="M11 13V5h5M11 9h4.500" stroke="#fff" stroke-width="2.300" fill="none"/><path d="M8.500 20.500h9" stroke="#fff" stroke-width="2.500" stroke-dasharray="2.400 .9"/></svg></button>
    <button aria-label="OneDrive folder" class="-ml-1 flex w-12 items-center justify-center border-b-2 border-[#ff7a10] bg-[#a66a36]"><svg class="h-5 w-5" viewBox="0 0 20 20"><path d="M0 0h5l8 1v18H0z" fill="#e9bd5f"/><path d="M0 0l4 3v17l-4-2z" fill="#fff0bd"/><path d="M4 3l9-3v15l-9 3z" fill="#f5d27e"/><path d="M8 18.500q-2-4 2-5 2-4 6-3 3 1 3 3 3 1 1.500 5z" fill="#1490df"/><path d="M10 13.500q2-4 6-3 3 1 3 3l-4 1z" fill="#0c63b8"/></svg></button>
  </div>
  <div class="ml-auto flex items-center">
    <button aria-label="Show hidden icons"><svg class="block h-[7px] w-3" viewBox="0 0 12 7" fill="none" stroke="#fff" stroke-width="1.300"><path d="M.5 6.500L6 1l5.500 5.500"/></svg></button>
    <svg class="ml-[10px] h-[11px] w-4" viewBox="0 0 16 11"><path d="M2 10.500Q-1.500 7 3 4.500 5-.5 9 .5q3 .5 3.500 3.500Q17 5 15.500 9L14 10.500z" fill="#28a8ea"/><path d="M3 4.500Q5-.5 9 .5q3 .5 3.500 3.500L8 6.500z" fill="#0364b8"/><path d="M1 8.500q-1-2.500 2-4l5 2 6 3.500-1 .5H3z" fill="#0f83d8"/></svg>
    <svg class="ml-2 h-[14px] w-4" viewBox="0 0 16 14" fill="none" stroke="#fff" stroke-width="1.200"><path d="M6 2h9.500v8H4.500V6M10 10v3M6 13.400h8M.6.600h4v3.800h-4zM2.600 4.500v6"/></svg>
    <svg class="ml-2 h-[14px] w-[17px]" viewBox="0 0 17 14" fill="none" stroke="#fff" stroke-width="1.200"><path d="M.6 4.500h2.500L7 1v12L3.100 9.500H.6zM9 4.500q1.500 2.500 0 5M11.500 3q2.500 4 0 8M14 1.500q3.500 5.500 0 11"/></svg>
    <svg class="ml-[11px] h-4 w-4" viewBox="0 0 16 16" fill="none" stroke="#fff" stroke-width="1.200"><path d="M4 8.500Q0 9 .6 12q.4 2.500 3.400 2 2-.5 3.500-3.500L12.500 1q1.500-1 2 .5L9.500 12M5 15.500l2-4.500 4.500-8M9.500 9.500q5-5 6-2-.5 3-2 2.500"/></svg>
    <div class="ml-4 w-[50px] whitespace-nowrap text-center text-[11px] leading-[18px]"><div>9:19 AM</div><div>6/6/2023</div></div>
    <button aria-label="Notifications" class="relative ml-[19px] mr-5"><svg class="block h-[15px] w-4" viewBox="0 0 16 15"><path d="M0 0h16v12H9l-3 3v-3H0z" fill="#fff"/><path d="M3 3.500h10M3 6h10M3 8.500h7" stroke="#1b2741" stroke-width="1.200"/></svg><span class="absolute left-2 top-[7px] flex h-4 w-4 items-center justify-center rounded-full border border-[#999] bg-[#333b45] text-[11px] font-semibold leading-none">2</span></button>
    <span class="mr-1 h-10 w-px bg-[#53607a]"></span>
  </div>
</footer>

<script>
  // Ground grid: origin plus screen-space unit steps of the two horizontal axes
  const NS = 'http://www.w3.org/2000/svg', O = [785.2, 755.3], U = 22.12, V = 12.76;
  const at = (a, b) => [O[0] + (a + b) * U, O[1] + (a - b) * V];
  const grid = document.getElementById('grid'), labels = document.getElementById('labels');
  const line = (a1, b1, a2, b2, colour) => {
    const l = document.createElementNS(NS, 'path');
    l.setAttribute('d', 'M' + at(a1, b1) + 'L' + at(a2, b2));
    l.setAttribute('stroke', colour);
    grid.appendChild(l);
  };
  for (const major of [false, true]) {
    for (let a = -3; a < 17; a++) if ((a % 5 === 0) === major) line(a, -6, a, 15, major ? '#cfcfcf' : '#ececec');
    for (let b = -5; b < 15; b++) if ((b % 5 === 0) === major) line(-4, b, 17, b, major ? '#cfcfcf' : '#ececec');
  }
  line(-4, 0, 17, 0, '#ff8c8c');
  line(0, -6, 0, 0, '#7dff7d');
  line(-4, -6, 17, -6, '#707070'); line(17, -6, 17, 15, '#707070');
  line(17, 15, -4, 15, '#707070'); line(-4, 15, -4, -6, '#707070');
  const label = (value, matrix, [x, y], dx) => {
    const t = document.createElementNS(NS, 'text');
    t.setAttribute('transform', `matrix(${matrix},${x},${y})`);
    t.setAttribute('x', dx); t.setAttribute('y', 3);
    t.textContent = Math.abs(value);
    labels.appendChild(t);
  };
  for (let a = -4; a <= 10; a++) label(a, '1,-.58,1,.58', at(a, -6), 0);
  for (let b = -1; b <= 15; b++) label(b, '1,.58,-1,.58', at(17, b), b < 0 ? 0 : 3);
</script>
</body>
</html>
